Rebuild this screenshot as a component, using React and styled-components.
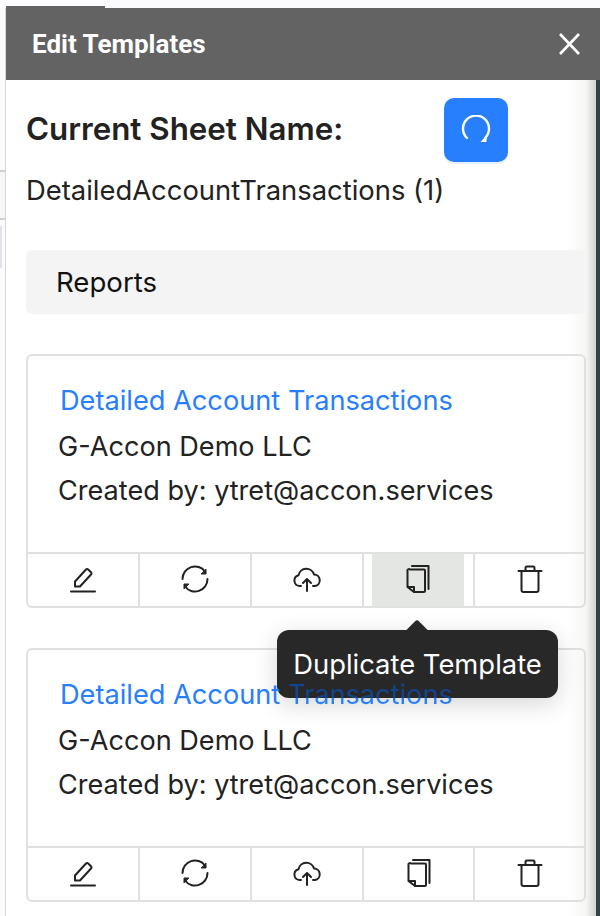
import React from "react";
import styled, { createGlobalStyle } from "styled-components";

const Global = createGlobalStyle`
  html, body { margin: 0; padding: 0; width: 600px; height: 916px; overflow: hidden; background: #f8fafd; }
  * { box-sizing: border-box; }
`;

const Page = styled.div`
  width: 600px;
  height: 916px;
  padding: 8px 0 0 5px;
  overflow: hidden;
  font-family: Inter, "Liberation Sans", sans-serif;
  background:
    linear-gradient(#cfcfcf, #cfcfcf) 0 170px / 5px 2px no-repeat,
    linear-gradient(#cfcfcf, #cfcfcf) 0 218px / 5px 2px no-repeat,
    linear-gradient(#e2e2ea, #e2e2ea) 0 226px / 2px 42px no-repeat,
    linear-gradient(#f6f6f6, #f6f6f6) 0 172px / 5px 46px no-repeat,
    #fbfbfd;
`;

const Panel = styled.div`
  position: relative;
  width: 595px;
  height: 908px;
  border-left: 1px solid #d8d8d8;
  background: linear-gradient(to right, #fff 0, #fff 562px, #f6f6f5 580px, #d5d5d2 589.500px, #2f4348 590px, #2f4348 100%);
`;

const Header = styled.header`
  position: relative;
  height: 72px;
  padding: 0 18px 0 26px;
  background: #636363;
  display: flex;
  align-items: center;
  justify-content: space-between;

  &::before {
    content: "";
    position: absolute;
    left: 0;
    top: -2px;
    width: 99px;
    height: 2px;
    background: #636363;
  }
`;

const HeaderTitle = styled.h1`
  margin: 0;
  font: 700 26px Roboto, sans-serif;
  color: #fff;
`;

const CloseButton = styled.button`
  padding: 0;
  border: 0;
  background: none;
  width: 26px;
  height: 26px;
  display: flex;
`;

const Body = styled.main`
  padding: 18px 14px 0 20px;
`;

const SheetRow = styled.div`
  display: flex;
  align-items: center;
  height: 64px;
  gap: 101px;
`;

const SheetLabel = styled.h2`
  margin: -2px 0 0;
  font-size: 31.300px;
  font-weight: 600;
  color: #222;
`;

const RefreshButton = styled.button`
  width: 64px;
  height: 64px;
  padding: 0;
  border: 0;
  border-radius: 10px;
  background: #277ffe;
  box-shadow: 0 2px 0 #e5f1ff;
  display: flex;
  align-items: center;
  justify-content: center;
`;

const SheetName = styled.div`
  margin-top: 10px;
  height: 36px;
  line-height: 36px;
  font-size: 27.400px;
  color: #222;
`;

const Section = styled.div`
  margin-top: 42px;
  height: 64px;
  padding-left: 30px;
  border-radius: 6px;
  background: #f4f4f4;
  font-size: 27.600px;
  color: #111;
  display: flex;
  align-items: center;
`;

const Card = styled.article`
  margin-top: 40px;
  height: 254px;
  border: 2px solid #e0e0e0;
  border-radius: 6px;
  display: flex;
  flex-direction: column;
`;

const CardBody = styled.div`
  flex: 1;
  padding: 26px 0 0 30px;
`;

const CardTitle = styled.a`
  position: relative;
  z-index: 3;
  display: block;
  height: 37px;
  margin: 0 0 6px 2px;
  line-height: 37px;
  font-size: 27.200px;
  color: #277ffe;
`;

const CoveredWord = styled.span`
  background: linear-gradient(to bottom, #12458f 0 60%, #277ffe 60% 100%);
  -webkit-background-clip: text;
  background-clip: text;
  color: transparent;
`;

const CardLine = styled.div`
  height: 44px;
  line-height: 44px;
  font-size: 27.100px;
  color: #222;
`;

const Actions = styled.div`
  height: 54px;
  display: grid;
  grid-template-columns: 110px 112px 112px 111px 1fr;
  border-top: 2px solid #e0e0e0;
`;

const Action = styled.button`
  padding: 0 0 2px;
  border: 0;
  border-left: ${(p) => (p.$first ? "0" : "2px solid #e0e0e0")};
  background: none;
  display: flex;
  align-items: center;
  justify-content: center;
  ${(p) =>
    p.$active &&
    "background: linear-gradient(to right, #fff 0 8px, #e4e6e3 8px 100%); border-right: 9px solid #fff; padding-left: 8px;"}
`;

const Tooltip = styled.div`
  position: absolute;
  z-index: 2;
  left: 271px;
  top: 622px;
  width: 281px;
  height: 68px;
  border-radius: 12px;
  background: #282828;
  box-shadow: 0 6px 24px rgba(0, 0, 0, 0.16);
  color: #fff;
  font-size: 27.400px;
  display: flex;
  align-items: center;
  justify-content: center;

  &::before {
    content: "";
    position: absolute;
    top: -7px;
    left: 131px;
    width: 18px;
    height: 18px;
    border-radius: 3px;
    background: #282828;
    transform: rotate(45deg);
  }
`;

const TooltipText = styled.span`
  position: relative;
`;

const Svg = styled.svg`
  display: block;
  fill: none;
  stroke: #222;
  stroke-width: 2;
  stroke-linecap: round;
  stroke-linejoin: round;
`;

const Pencil = () => (
  <Svg width="28" height="28" viewBox="0 0 28 28">
    <path d="M2 26.500h24M6 21.500v-5L17 4.500a1.500 1.500 0 0 1 2.200 0l2.800 2.800a1.500 1.500 0 0 1 0 2.200L11 21.500z" />
  </Svg>
);

const Sync = () => (
  <Svg width="30" height="30" viewBox="0 0 30 30">
    <path d="M2.500 15A12.500 12.500 0 0 1 25 7.500M27.500 15A12.500 12.500 0 0 1 5 22.500" />
    <path d="M26 5.500v4.500h-4.500z M4 24.500v-4.500h4.500z" fill="#222" strokeWidth="1" />
  </Svg>
);

const Upload = () => (
  <Svg width="30" height="28" viewBox="0 0 30 28">
    <path d="M9 21H7.500A5.500 5.500 0 0 1 6.500 10.200 8 8 0 0 1 22 9.500 5.800 5.800 0 0 1 23 21h-2" />
    <path d="M15 26V14M11 18l4-4 4 4" />
  </Svg>
);

const Copy = () => (
  <Svg width="24" height="30" viewBox="0 0 24 30" strokeLinecap="butt">
    <path d="M6 2h16.500V25" />
    <path d="M4 5.500h14a1 1 0 0 1 1 1V27a1 1 0 0 1-1 1H8l-6.500-5V7a1.500 1.500 0 0 1 2.500-1.500z" />
    <path d="M2 23h6v5" />
  </Svg>
);

const Trash = () => (
  <Svg width="26" height="28" viewBox="0 0 26 28">
    <path d="M1.500 6h23M8.500 6V3a1.500 1.500 0 0 1 1.500-1.500h6A1.500 1.500 0 0 1 17.500 3v3M4.500 6v19a2 2 0 0 0 2 2h13a2 2 0 0 0 2-2V6" />
  </Svg>
);

const TemplateCard = ({ active, covered }) => (
  <Card>
    <CardBody>
      <CardTitle>
        Detailed Account {covered ? <CoveredWord>Transactions</CoveredWord> : "Transactions"}
      </CardTitle>
      <CardLine>G-Accon Demo LLC</CardLine>
      <CardLine>Created by: ytret@accon.services</CardLine>
    </CardBody>
    <Actions>
      <Action $first><Pencil /></Action>
      <Action><Sync /></Action>
      <Action><Upload /></Action>
      <Action $active={active}><Copy /></Action>
      <Action><Trash /></Action>
    </Actions>
  </Card>
);

export default function App() {
  return (
    <Page>
      <Global />
      <Panel>
        <Header>
          <HeaderTitle>Edit Templates</HeaderTitle>
          <CloseButton aria-label="Close">
            <svg width="26" height="26" viewBox="0 0 26 26" fill="none" stroke="#fff" strokeWidth="2.600">
              <path d="M4 3l19 20M23 3L4 23" />
            </svg>
          </CloseButton>
        </Header>
        <Body>
          <SheetRow>
            <SheetLabel>Current Sheet Name:</SheetLabel>
            <RefreshButton aria-label="Refresh">
              <svg width="30" height="30" viewBox="0 0 30 30" fill="none">
                <path d="M6 23A13 13 0 1 1 24.500 22.500" stroke="#fff" strokeWidth="2.400" strokeLinecap="round" />
                <path d="M19.500 27L26 20l-.5 7z" fill="#fff" />
              </svg>
            </RefreshButton>
          </SheetRow>
          <SheetName>DetailedAccountTransactions (1)</SheetName>
          <Section>Reports</Section>
          <TemplateCard active />
          <TemplateCard covered />
        </Body>
        <Tooltip>
          <TooltipText>Duplicate Template</TooltipText>
        </Tooltip>
      </Panel>
    </Page>
  );
}
